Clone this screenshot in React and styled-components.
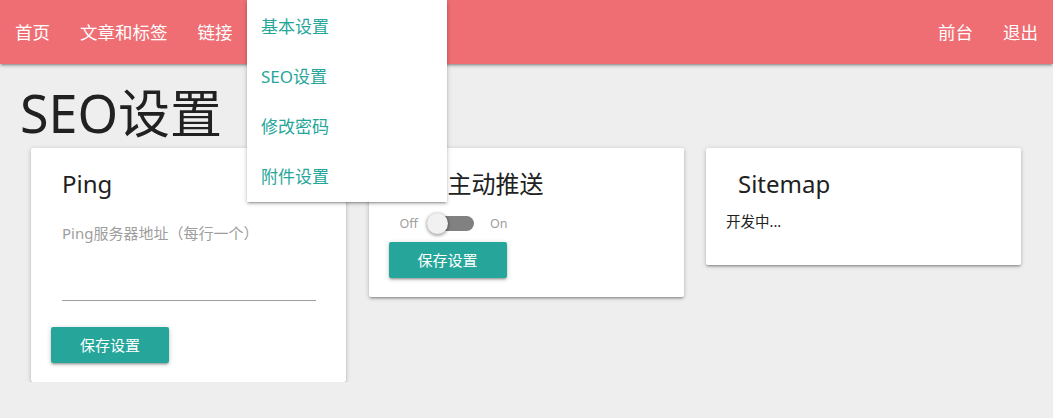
import React from "react";
import styled, { createGlobalStyle } from "styled-components";

const GlobalStyle = createGlobalStyle`
  body {
    margin: 0;
    background: #eeeeee;
    font-family: "Noto Sans", "Noto Sans CJK SC", sans-serif;
    color: rgba(0, 0, 0, 0.87);
  }
`;

const Nav = styled.nav`
  position: relative;
  height: 64px;
  background: #ee6e73;
  display: flex;
  justify-content: space-between;
  box-shadow: 0 2px 2px 0 rgba(0, 0, 0, 0.14), 0 3px 1px -2px rgba(0, 0, 0, 0.12),
    0 1px 5px 0 rgba(0, 0, 0, 0.2);
`;

const NavList = styled.ul`
  display: flex;
  margin: 0;
  padding: 0;
  list-style: none;
`;

const NavLink = styled.li`
  padding: 0 15px;
  line-height: 64px;
  font-size: 17.5px;
  color: #fff;
  cursor: pointer;
`;

const Dropdown = styled.ul`
  position: absolute;
  top: 0;
  left: 247px;
  width: 200px;
  margin: 0;
  padding: 2px 0 0;
  list-style: none;
  background: #fff;
  z-index: 10;
  box-shadow: 0 2px 2px 0 rgba(0, 0, 0, 0.14), 0 3px 1px -2px rgba(0, 0, 0, 0.12),
    0 1px 5px 0 rgba(0, 0, 0, 0.2);
`;

const DropItem = styled.li`
  height: 50px;
  line-height: 50px;
  padding: 0 14px;
  font-size: 17px;
  color: #26a69a;
`;

const Main = styled.main`
  padding: 0 32px 0 31px;
`;

const Heading = styled.h1`
  margin: 0 0 0 -11px;
  height: 84px;
  line-height: 98px;
  font-size: 52px;
  font-weight: 400;
  color: #212121;
`;

const CardRow = styled.div`
  display: grid;
  grid-template-columns: repeat(3, 315px);
  column-gap: 22.5px;
  align-items: start;
`;

const Card = styled.section`
  background: #fff;
  border-radius: 2px;
  padding: 20px 20px 19px;
  box-shadow: 0 2px 2px 0 rgba(0, 0, 0, 0.14), 0 3px 1px -2px rgba(0, 0, 0, 0.12),
    0 1px 5px 0 rgba(0, 0, 0, 0.2);
`;

const CardTitle = styled.h2`
  margin: 0 0 10px ${(p) => p.$indent || 11}px;
  font-size: 24px;
  line-height: 32px;
  font-weight: 400;
  color: #212121;
`;

const Field = styled.div`
  margin: 22px 10px 0 11px;
`;

const Label = styled.label`
  display: block;
  font-size: 15px;
  line-height: 22px;
  color: #9e9e9e;
`;

const TextArea = styled.div`
  height: 56px;
  border-bottom: 1px solid #9e9e9e;
`;

const Button = styled.button`
  display: block;
  margin-top: ${(p) => p.$top}px;
  height: 36px;
  padding: 0 29px;
  border: none;
  border-radius: 2px;
  background: #26a69a;
  color: #fff;
  font-family: inherit;
  font-size: 15px;
  line-height: 36px;
  box-shadow: 0 2px 2px 0 rgba(0, 0, 0, 0.14), 0 3px 1px -2px rgba(0, 0, 0, 0.12),
    0 1px 5px 0 rgba(0, 0, 0, 0.2);
`;

const SwitchRow = styled.div`
  display: flex;
  align-items: center;
  height: 26px;
  padding-left: 11px;
  font-size: 12.5px;
  color: #9e9e9e;
`;

const Track = styled.span`
  position: relative;
  width: 46px;
  height: 15px;
  margin: 0 16px 0 10px;
  border-radius: 8px;
  background: #818181;
`;

const Knob = styled.span`
  position: absolute;
  left: -1px;
  top: -3px;
  width: 21px;
  height: 21px;
  border-radius: 50%;
  background: #f1f1f1;
  box-shadow: 0 1px 3px 1px rgba(0, 0, 0, 0.3);
`;

const Text = styled.p`
  margin: 0 0 14px;
  font-size: 14.5px;
  line-height: 22px;
  color: #212121;
`;

export default function App() {
  return (
    <>
      <GlobalStyle />
      <Nav>
        <NavList>
          <NavLink>首页</NavLink>
          <NavLink>文章和标签</NavLink>
          <NavLink>链接</NavLink>
        </NavList>
        <NavList>
          <NavLink>前台</NavLink>
          <NavLink>退出</NavLink>
        </NavList>
        <Dropdown>
          <DropItem>基本设置</DropItem>
          <DropItem>SEO设置</DropItem>
          <DropItem>修改密码</DropItem>
          <DropItem>附件设置</DropItem>
        </Dropdown>
      </Nav>
      <Main>
        <Heading>SEO设置</Heading>
        <CardRow>
          <Card>
            <CardTitle>Ping</CardTitle>
            <Field>
              <Label>Ping服务器地址（每行一个）</Label>
              <TextArea />
            </Field>
            <Button $top={26}>保存设置</Button>
          </Card>
          <Card>
            <CardTitle>百度主动推送</CardTitle>
            <SwitchRow>
              Off
              <Track>
                <Knob />
              </Track>
              On
            </SwitchRow>
            <Button $top={6}>保存设置</Button>
          </Card>
          <Card>
            <CardTitle $indent={12}>Sitemap</CardTitle>
            <Text>开发中...</Text>
          </Card>
        </CardRow>
      </Main>
    </>
  );
}
